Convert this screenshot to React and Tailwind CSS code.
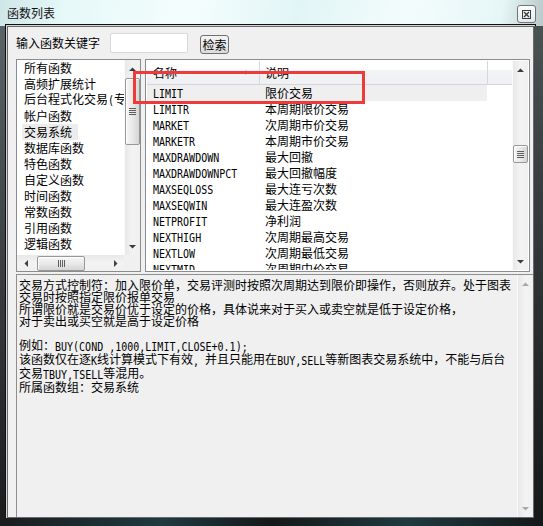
import React from "react";

function Arrow({ dir, color = "#404040" }) {
  const paths = {
    up: "M0 4 L3.5 0.5 L7 4 Z",
    down: "M0 0 L7 0 L3.5 3.5 Z",
    left: "M4 0 L4 7 L0.5 3.5 Z",
    right: "M0 0 L3.5 3.5 L0 7 Z",
  };
  const vert = dir === "up" || dir === "down";
  const w = vert ? 7 : 4;
  const h = vert ? 4 : 7;
  return (
    <svg width={w} height={h} viewBox={`0 0 ${w} ${h}`}>
      <path d={paths[dir]} fill={color} />
    </svg>
  );
}

function VThumb({ h }) {
  return (
    <div
      className="mx-auto w-[15px] rounded-[2px] border border-[#979797] bg-gradient-to-r from-[#f6f6f6] via-[#e9e9e9] to-[#d5d5d5] flex flex-col items-center justify-center gap-[1px] shadow-[inset_1px_1px_0_#ffffff]"
      style={{ height: h }}
    >
      {h > 14 && (
        <>
          <div className="w-[7px] h-[1px] bg-[#5e5e5e]" />
          <div className="w-[7px] h-[1px] bg-[#5e5e5e]" />
          <div className="w-[7px] h-[1px] bg-[#5e5e5e]" />
          <div className="w-[7px] h-[1px] bg-[#5e5e5e]" />
        </>
      )}
    </div>
  );
}

function VScroll({ spacer, thumb, disabled, btn = 17 }) {
  const c = disabled ? "#a8a8a8" : "#3c3c3c";
  return (
    <div className="w-[16px] h-full flex flex-col bg-gradient-to-r from-[#e8e8e8] via-[#f3f3f3] to-[#f0f0f0] border-l border-[#fbfbfb]">
      <div className="flex items-center justify-center shrink-0" style={{ height: btn }}>
        <Arrow dir="up" color={c} />
      </div>
      <div className="flex-1 flex flex-col min-h-0">
        {thumb ? (
          <>
            <div className="shrink-0" style={{ height: spacer }} />
            <VThumb h={thumb} />
          </>
        ) : null}
      </div>
      <div className="flex items-center justify-center shrink-0" style={{ height: btn }}>
        <Arrow dir="down" color={c} />
      </div>
    </div>
  );
}

function HScroll() {
  return (
    <div className="flex-1 h-full flex bg-gradient-to-b from-[#e8e8e8] via-[#f3f3f3] to-[#f0f0f0]">
      <div className="w-[17px] flex items-center justify-center">
        <Arrow dir="left" />
      </div>
      <div className="flex-1 flex items-center">
        <div className="ml-[3px] w-[48px] h-[15px] rounded-[2px] border border-[#979797] bg-gradient-to-b from-[#f6f6f6] via-[#e9e9e9] to-[#d5d5d5] flex items-center justify-center gap-[1px] shadow-[inset_1px_1px_0_#ffffff]">
          <div className="w-[1px] h-[7px] bg-[#5e5e5e]" />
          <div className="w-[1px] h-[7px] bg-[#5e5e5e]" />
          <div className="w-[1px] h-[7px] bg-[#5e5e5e]" />
          <div className="w-[1px] h-[7px] bg-[#5e5e5e]" />
        </div>
      </div>
      <div className="w-[17px] flex items-center justify-center">
        <Arrow dir="right" />
      </div>
    </div>
  );
}

const M = ({ children }) => (
  <span className="inline-block scale-y-[1.2] whitespace-pre font-['DejaVu_Sans_Mono',monospace] text-[10px]">{children}</span>
);

const leftItems = [
  "所有函数",
  "高频扩展统计",
  null,
  "帐户函数",
  "交易系统",
  "数据库函数",
  "特色函数",
  "自定义函数",
  "时间函数",
  "常数函数",
  "引用函数",
  "逻辑函数",
];

const rows = [
  ["LIMIT", "限价交易"],
  ["LIMITR", "本周期限价交易"],
  ["MARKET", "次周期市价交易"],
  ["MARKETR", "本周期市价交易"],
  ["MAXDRAWDOWN", "最大回撤"],
  ["MAXDRAWDOWNPCT", "最大回撤幅度"],
  ["MAXSEQLOSS", "最大连亏次数"],
  ["MAXSEQWIN", "最大连盈次数"],
  ["NETPROFIT", "净利润"],
  ["NEXTHIGH", "次周期最高交易"],
  ["NEXTLOW", "次周期最低交易"],
  ["NEXTMID", "次周期中价交易"],
];

export default function App() {
  return (
    <div className="relative w-[543px] h-[526px] flex flex-col bg-[#181b1e] font-['Noto_Sans_CJK_SC',sans-serif] text-[12px] text-black overflow-hidden">
      {/* title bar */}
      <div className="h-[26px] shrink-0 flex items-start justify-between bg-[linear-gradient(100deg,#cfe6e8_0%,#e6f8f8_12%,#f4fdfd_35%,#e2f5f6_55%,#f3fcfc_75%,#e6f6f7_92%,#b9c9ca_100%)]">
        <div className="pl-[7px] pt-[5px] leading-[16px] text-[#111]">函数列表</div>
        <div className="mt-[5px] mr-[7px] w-[19px] h-[18px] rounded-[3px] border border-[#707579] bg-gradient-to-b from-[#fdfefe] to-[#e4eaec] flex items-center justify-center">
          <svg width="9" height="9" viewBox="0 0 9 9">
            <rect x="0.5" y="0.5" width="8" height="8" fill="none" stroke="#3a3a3a" />
            <path d="M2 2 L7 7 M7 2 L2 7" stroke="#3a3a3a" strokeWidth="1.4" />
          </svg>
        </div>
      </div>

      <div className="flex-1 flex min-h-0">
        <div className="w-[7px] shrink-0 bg-gradient-to-b from-[#5a6466] to-[#1a1c1e]" />
        {/* client */}
        <div className="flex-1 flex flex-col min-w-0 bg-[#f0f0f0] border border-[#6a6a6a] shadow-[0_0_0_1px_#d4d4d4,0_0_0_2px_#101010]">
          {/* search row */}
          <div className="mt-[6px] pl-[8px] h-[20px] flex items-center shrink-0">
            <span className="leading-[20px]">输入函数关键字</span>
            <div className="ml-[10px] w-[78px] h-[20px] bg-white border border-[#d6d8dc] rounded-[2px]" />
            <div className="ml-[12px] mt-[3px] w-[29px] h-[19px] rounded-[3px] border border-[#707070] bg-gradient-to-b from-[#f4f4f4] to-[#dcdcdc] flex items-center justify-center leading-[16px]">
              检索
            </div>
          </div>

          {/* lists */}
          <div className="mt-[6px] pl-[8px] h-[213px] flex gap-[4px] shrink-0">
            {/* left list */}
            <div className="w-[125px] h-full border border-[#8a8c90] bg-white flex flex-col">
              <div className="flex-1 flex min-h-0">
                <div className="flex-1 min-w-0 overflow-hidden">
                  {leftItems.map((it, i) => (
                    <div key={i} className="h-[16px] flex items-center whitespace-nowrap">
                      <span
                        className={
                          "ml-[5px] pl-[2px] pr-[6px] leading-[16px] " +
                          (i === 4 ? "bg-[#ececec]" : "")
                        }
                      >
                        {it === null ? (
                          <>
                            后台程式化交易<M>(</M>专业版<M>)</M>
                          </>
                        ) : (
                          it
                        )}
                      </span>
                    </div>
                  ))}
                </div>
                <VScroll spacer={1} thumb={67} />
              </div>
              <div className="h-[16px] flex shrink-0">
                <HScroll />
                <div className="w-[16px] h-full bg-[#f0f0f0]" />
              </div>
            </div>

            {/* right list */}
            <div className="w-[385px] h-full border border-[#8a8c90] bg-white p-[1px] flex">
              <div className="flex-1 min-w-0 flex flex-col overflow-hidden">
                <div className="h-[24px] shrink-0 flex border-b border-[#d5d5d5] bg-[linear-gradient(to_bottom,#ffffff_0%,#ffffff_38%,#f2f3f5_40%,#eff0f3_100%)]">
                  <div className="w-[113px] border-r border-[#d8d8d8] flex items-center pl-[6px]">
                    <span>名称</span>
                    <svg className="ml-auto mr-[11px]" width="3" height="5" viewBox="0 0 3 5">
                      <path d="M0 0 L3 2.5 L0 5" fill="none" stroke="#c4c4c4" />
                    </svg>
                  </div>
                  <div className="w-[228px] border-r border-[#d8d8d8] flex items-center pl-[5px]">说明</div>
                </div>
                {rows.map(([n, d], i) => (
                  <div
                    key={n}
                    className={
                      "h-[16px] shrink-0 flex items-center whitespace-nowrap " +
                      (i === 0 ? "w-[340px] bg-[#efefef]" : "")
                    }
                  >
                    <div className="w-[113px] pl-[6px] leading-[16px]">
                      <M>{n}</M>
                    </div>
                    <div className="pl-[5px] leading-[16px]">{d}</div>
                  </div>
                ))}
              </div>
              <VScroll spacer={67} thumb={18} />
            </div>
          </div>

          {/* description */}
          <div className="mt-[2px] ml-[8px] flex-1 min-h-0 flex border-t border-l border-[#8e8e8e]">
            <div className="flex-1 min-w-0 pl-[2px] pt-[4px] leading-[12px] whitespace-nowrap overflow-hidden">
              <div>交易方式控制符：加入限价单，交易评测时按照次周期达到限价即操作，否则放弃。处于图表</div>
              <div>交易时按照指定限价报单交易</div>
              <div>所谓限价就是交易价优于设定的价格，具体说来对于买入或卖空就是低于设定价格，</div>
              <div>对于卖出或买空就是高于设定价格</div>
              <div className="h-[12px]" />
              <div>
                例如：<M>BUY(COND ,1000,LIMIT,CLOSE+0.1);</M>
              </div>
              <div>
                该函数仅在逐<M>K</M>线计算模式下有效<M>, </M>并且只能用在<M>BUY,SELL</M>等新图表交易系统中，不能与后台
              </div>
              <div>
                交易<M>TBUY,TSELL</M>等混用。
              </div>
              <div>所属函数组：交易系统</div>
            </div>
            <VScroll disabled />
          </div>
        </div>
        <div className="w-[9px] shrink-0 bg-gradient-to-b from-[#4a5254] to-[#16181a]" />
      </div>
      <div className="h-[8px] shrink-0 bg-[linear-gradient(to_right,#1a1c1e,#1f3a40_30%,#15181a_50%,#1f3a40_75%,#15181a)]" />

      {/* red annotation */}
      <div className="absolute left-[133px] top-[71px] w-[232px] h-[33px] border-[3px] border-[#ef3a3a]" />
    </div>
  );
}
